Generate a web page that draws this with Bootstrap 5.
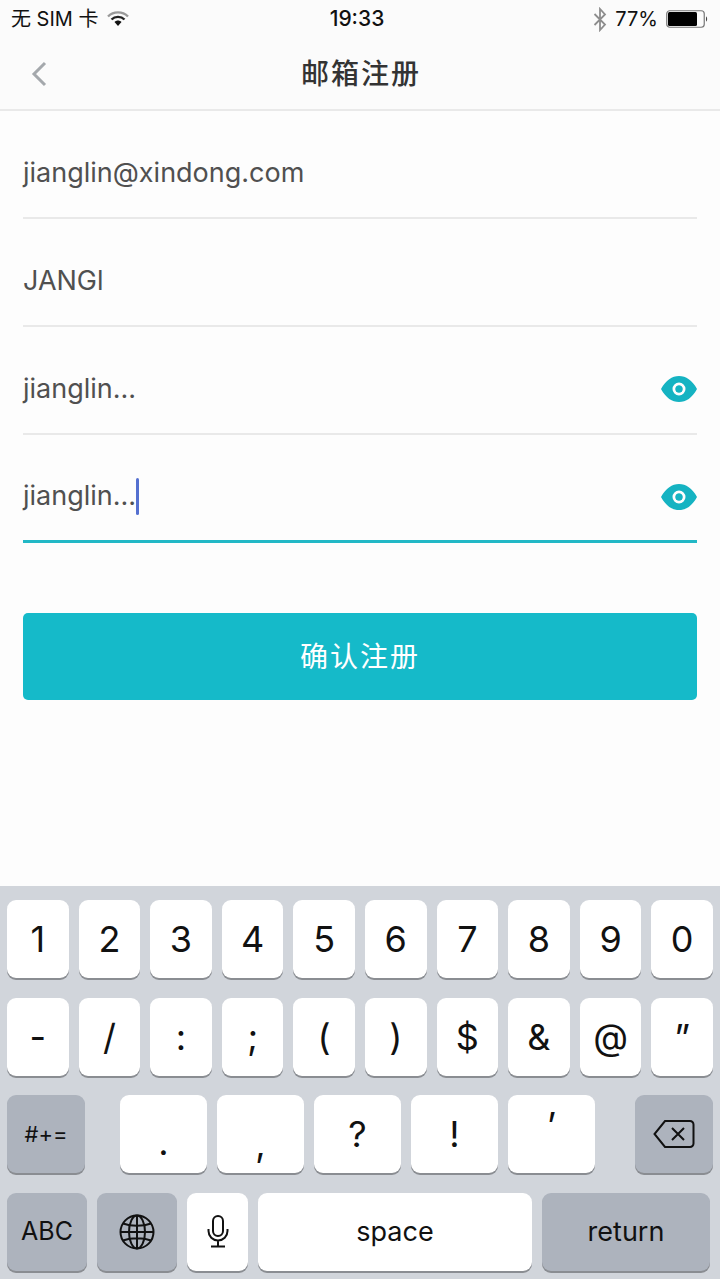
<!DOCTYPE html>
<html lang="zh-CN">
<head>
  <meta charset="UTF-8" />
  <title>邮箱注册</title>
  <meta name="viewport" content="width=device-width, initial-scale=1" />
  <link href="https://cdn.jsdelivr.net/npm/bootstrap@5.3.3/dist/css/bootstrap.min.css" rel="stylesheet" />
  <style>
    body {
      height: 1279px;
      overflow: hidden;
      background: #fdfdfd;
      font-family: Inter, "Noto Sans CJK SC", sans-serif;
      color: #4a4a4a;
    }
    .status-bar {
      height: 38px;
      padding: 0 11px;
      background: #fbfbfb;
      color: #111;
      font-size: 20px;
      position: relative;
    }
    .status-time {
      font-weight: 500;
      font-size: 21px;
    }
    .status-center {
      flex: 1;
      text-align: center;
      margin-left: -6px;
    }
    .status-side {
      width: 270px;
    }
    .top-bar {
      height: 73px;
      background: #fbfbfb;
      border-bottom: 2px solid #e9e9e9;
      padding-left: 31px;
    }
    .top-title {
      flex: 1;
      text-align: center;
      font-size: 28px;
      font-weight: 500;
      color: #333;
      letter-spacing: 2px;
      margin-left: -45px;
    }
    .form-area {
      padding: 0 23px;
    }
    .field-row {
      height: 108px;
      border-bottom: 2px solid #e9e9e9;
      font-size: 27px;
      padding-top: 34px;
      padding-bottom: 16px;
      color: #505050;
    }
    .field-row.active-row {
      border-bottom: 3px solid #22b8c6;
    }
    .text-caret {
      width: 3px;
      height: 37px;
      background: #5470d0;
      margin-left: 0;
      border-radius: 2px;
    }
    .eye-icon {
      margin-left: auto;
    }
    .submit-btn {
      height: 87px;
      margin-top: 70px;
      background: #15bac9;
      border: 0;
      border-radius: 5px;
      color: #fff;
      font-size: 28px;
      letter-spacing: 2px;
    }
    .submit-btn:hover {
      background: #15bac9;
      color: #fff;
    }
    .kb {
      height: 393px;
      background: #d1d5db;
      padding: 14px 7px 0;
      margin-top: auto;
    }
    .kb-row {
      height: 80px;
      margin-bottom: 17.5px;
      gap: 10px;
    }
    .kb-key {
      flex: 1 1 0;
      background: #fff;
      border-radius: 9px;
      box-shadow: 0 2px 0 #8a8d92;
      color: #111;
      font-size: 36px;
      line-height: 1;
      height: 78px;
    }
    .kb-key.dark-key {
      background: #adb3bd;
    }
    .key-sym { font-size: 22px; }
    .key-abc { font-size: 25px; }
    .key-word { font-size: 27px; }
    .w-78 { flex: 0 0 78px; }
    .w-87 { flex: 0 0 87px; }
    .w-80 { flex: 0 0 80px; }
    .w-61 { flex: 0 0 61px; }
    .w-274 { flex: 0 0 274px; }
    .w-168 { flex: 0 0 168px; }
    .row-gap-start { margin-left: 25px; }
    .row-gap-end { margin-left: 30px; }
    .lift { padding-bottom: 4px; }
    .period-key { padding-top: 16px; }
    .comma-key { padding-top: 20px; }
    .quote-key { padding-bottom: 18px; }
  </style>
</head>
<body class="d-flex flex-column">

  <!-- status bar -->
  <div class="status-bar d-flex align-items-center">
    <div class="status-side d-flex align-items-center gap-2">
      <span>无 SIM 卡</span>
      <svg width="22" height="16" viewBox="0 0 22 16">
        <path d="M1 5.5C6.5 0 15.500 0 21 5.500" fill="none" stroke="#999" stroke-width="2.400"/>
        <path d="M4.500 8.500C8 5 14 5 17.500 8.500" fill="none" stroke="#222" stroke-width="2.400"/>
        <path d="M7.500 11L11 15L14.500 11C12.500 9 9.500 9 7.500 11Z" fill="#111"/>
      </svg>
    </div>
    <div class="status-center status-time">19:33</div>
    <div class="status-side d-flex align-items-center justify-content-end gap-2">
      <svg width="14" height="25" viewBox="0 0 14 25">
        <path d="M1.500 7L12 17.500L7 23V2L12 7.500L1.500 18" fill="none" stroke="#8d8d8d" stroke-width="1.800"/>
      </svg>
      <span>77%</span>
      <svg class="ms-n1" width="43" height="18" viewBox="0 0 43 18">
        <rect x="0.750" y="0.750" width="37.500" height="16.500" rx="3" fill="none" stroke="#777" stroke-width="1.200"/>
        <rect x="2" y="2" width="29" height="14" rx="1.500" fill="#000"/>
        <path d="M40 6.500C41.500 7 41.500 11 40 11.500Z" fill="#444"/>
      </svg>
    </div>
  </div>

  <!-- top bar -->
  <div class="top-bar d-flex align-items-center">
    <svg width="16" height="26" viewBox="0 0 16 26">
      <path d="M14 2L3 13L14 24" fill="none" stroke="#a4a8ac" stroke-width="3"/>
    </svg>
    <div class="top-title">邮箱注册</div>
  </div>

  <!-- form -->
  <div class="form-area">
    <div class="field-row d-flex align-items-center">jianglin@xindong.com</div>
    <div class="field-row d-flex align-items-center">JANGl</div>
    <div class="field-row d-flex align-items-center">
      <span>jianglin...</span>
      <svg class="eye-icon" width="36" height="26" viewBox="0 0 36 26">
        <path fill-rule="evenodd" fill="#15b3c2" d="M0 13C5 4 11 0 18 0S31 4 36 13C31 22 25 26 18 26S5 22 0 13ZM18 6.500A6.500 6.500 0 1 0 18 19.500A6.500 6.500 0 1 0 18 6.500ZM18 9.500A3.500 3.500 0 1 1 18 16.500A3.500 3.500 0 1 1 18 9.500Z"/>
        <circle cx="18" cy="13" r="3.500" fill="#15b3c2"/>
      </svg>
    </div>
    <div class="field-row active-row d-flex align-items-center">
      <span>jianglin...</span>
      <span class="text-caret"></span>
      <svg class="eye-icon" width="36" height="26" viewBox="0 0 36 26">
        <path fill-rule="evenodd" fill="#15b3c2" d="M0 13C5 4 11 0 18 0S31 4 36 13C31 22 25 26 18 26S5 22 0 13ZM18 6.500A6.500 6.500 0 1 0 18 19.500A6.500 6.500 0 1 0 18 6.500ZM18 9.500A3.500 3.500 0 1 1 18 16.500A3.500 3.500 0 1 1 18 9.500Z"/>
        <circle cx="18" cy="13" r="3.500" fill="#15b3c2"/>
      </svg>
    </div>
    <button class="btn submit-btn w-100 d-flex align-items-center justify-content-center">确认注册</button>
  </div>

  <!-- keyboard -->
  <div class="kb">
    <div class="kb-row d-flex">
      <div class="kb-key d-flex align-items-center justify-content-center">1</div>
      <div class="kb-key d-flex align-items-center justify-content-center">2</div>
      <div class="kb-key d-flex align-items-center justify-content-center">3</div>
      <div class="kb-key d-flex align-items-center justify-content-center">4</div>
      <div class="kb-key d-flex align-items-center justify-content-center">5</div>
      <div class="kb-key d-flex align-items-center justify-content-center">6</div>
      <div class="kb-key d-flex align-items-center justify-content-center">7</div>
      <div class="kb-key d-flex align-items-center justify-content-center">8</div>
      <div class="kb-key d-flex align-items-center justify-content-center">9</div>
      <div class="kb-key d-flex align-items-center justify-content-center">0</div>
    </div>
    <div class="kb-row d-flex">
      <div class="kb-key d-flex align-items-center justify-content-center">-</div>
      <div class="kb-key d-flex align-items-center justify-content-center">/</div>
      <div class="kb-key d-flex align-items-center justify-content-center">:</div>
      <div class="kb-key d-flex align-items-center justify-content-center">;</div>
      <div class="kb-key d-flex align-items-center justify-content-center">(</div>
      <div class="kb-key d-flex align-items-center justify-content-center">)</div>
      <div class="kb-key d-flex align-items-center justify-content-center">$</div>
      <div class="kb-key d-flex align-items-center justify-content-center">&amp;</div>
      <div class="kb-key d-flex align-items-center justify-content-center">@</div>
      <div class="kb-key d-flex align-items-center justify-content-center">”</div>
    </div>
    <div class="kb-row d-flex">
      <div class="kb-key dark-key key-sym w-78 d-flex align-items-center justify-content-center">#+=</div>
      <div class="kb-key period-key row-gap-start d-flex align-items-center justify-content-center">.</div>
      <div class="kb-key comma-key d-flex align-items-center justify-content-center">,</div>
      <div class="kb-key d-flex align-items-center justify-content-center">?</div>
      <div class="kb-key d-flex align-items-center justify-content-center">!</div>
      <div class="kb-key quote-key d-flex align-items-center justify-content-center">’</div>
      <div class="kb-key dark-key w-78 row-gap-end d-flex align-items-center justify-content-center">
        <svg width="42" height="30" viewBox="0 0 42 30">
          <path d="M12 2H37A3.500 3.500 0 0 1 40.500 5.500V24.500A3.500 3.500 0 0 1 37 28H12L1.500 15Z" fill="none" stroke="#111" stroke-width="2"/>
          <path d="M19 9L31 21M31 9L19 21" stroke="#111" stroke-width="2"/>
        </svg>
      </div>
    </div>
    <div class="kb-row d-flex">
      <div class="kb-key dark-key key-abc w-80 d-flex align-items-center justify-content-center">ABC</div>
      <div class="kb-key dark-key w-80 d-flex align-items-center justify-content-center">
        <svg width="36" height="36" viewBox="0 0 36 36" fill="none" stroke="#111" stroke-width="2">
          <circle cx="18" cy="18" r="16.500"/>
          <ellipse cx="18" cy="18" rx="8" ry="16.500"/>
          <path d="M18 1.500V34.500M1.500 18H34.500M4 9.500C12 12.500 24 12.500 32 9.500M4 26.500C12 23.500 24 23.500 32 26.500"/>
        </svg>
      </div>
      <div class="kb-key w-61 d-flex align-items-center justify-content-center">
        <svg width="22" height="33" viewBox="0 0 22 33" fill="none" stroke="#111" stroke-width="2">
          <rect x="6" y="1" width="10" height="20" rx="5"/>
          <path d="M1.500 14V16A9.500 9.500 0 0 0 20.500 16V14M11 26V31.500M4 31.500H18"/>
        </svg>
      </div>
      <div class="kb-key key-word w-274 d-flex align-items-center justify-content-center">space</div>
      <div class="kb-key dark-key key-word w-168 d-flex align-items-center justify-content-center">return</div>
    </div>
  </div>

  <script src="https://cdn.jsdelivr.net/npm/bootstrap@5.3.3/dist/js/bootstrap.bundle.min.js"></script>
</body>
</html>
